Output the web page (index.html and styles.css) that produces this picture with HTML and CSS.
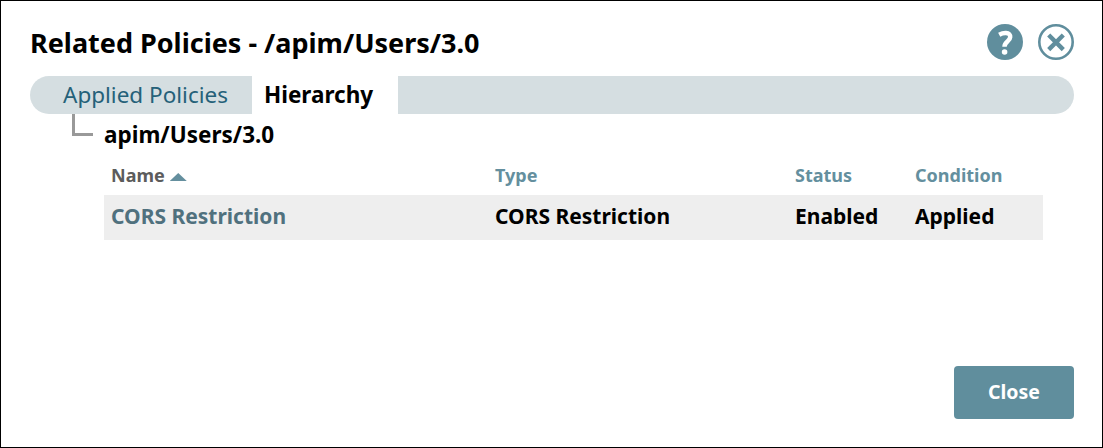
FILE: index.html
```html
<!DOCTYPE html>
<html lang="en">
<head>
<meta charset="utf-8">
<title>Related Policies</title>
<link rel="stylesheet" href="styles.css">
</head>
<body>
<main class="dialog">
  <header class="header">
    <h1 class="title">Related Policies - /apim/Users/3.0</h1>
    <div class="actions">
      <svg class="icon" viewBox="0 0 36 36" role="img" aria-label="Help"><circle cx="18" cy="18" r="18" fill="#608e9d"/><path d="M12.2 10.7C15 9.2 17.2 8.9 19 9C22 9.2 23.4 10.8 23.2 13.2C23 17.5 17.5 17 17.5 22.8" fill="none" stroke="#fff" stroke-width="4.5"/><circle cx="17.6" cy="28" r="2.8" fill="#fff"/></svg>
      <svg class="icon" viewBox="0 0 36 36" role="img" aria-label="Close dialog"><circle cx="18" cy="18" r="16.7" fill="none" stroke="#608e9d" stroke-width="2.6"/><path d="M10.7 11L25.3 25.6M25.3 11L10.7 25.6" stroke="#608e9d" stroke-width="4.4"/></svg>
    </div>
  </header>
  <nav class="tabs">
    <a class="tab">Applied Policies</a>
    <a class="tab tab-active">Hierarchy</a>
  </nav>
  <section class="node">
    <div class="branch"></div>
    <div class="content">
      <h2 class="path">apim/Users/3.0</h2>
      <div class="row head">
        <span class="sorted">Name<i class="arrow"></i></span><span>Type</span><span>Status</span><span>Condition</span>
      </div>
      <div class="row item">
        <a class="link">CORS Restriction</a><span>CORS Restriction</span><span>Enabled</span><span>Applied</span>
      </div>
    </div>
  </section>
  <footer class="footer"><button class="button">Close</button></footer>
</main>
</body>
</html>
```
FILE: styles.css
```css
* { box-sizing: border-box; }
body { margin: 0; font-family: "Noto Sans", sans-serif; color: #000; background: #fff; }
.dialog { width: 1103px; height: 448px; border: 1px solid #000; padding: 23px 28px 28px 29px; display: flex; flex-direction: column; }
.header { display: flex; justify-content: space-between; height: 52px; }
.title { margin: 0; font-size: 27px; line-height: 38px; font-weight: 700; white-space: nowrap; }
.actions { display: flex; gap: 15px; }
.icon { width: 36px; height: 36px; }
.tabs { display: flex; height: 38px; border-radius: 19px; background: #d5dee1; overflow: hidden; padding-left: 21px; flex: none; }
.tab { width: 201px; padding-left: 12px; font-size: 22.5px; line-height: 37px; color: #256179; white-space: nowrap; }
.tab-active { width: 146px; background: #fff; color: #000; font-weight: 700; }
.node { display: flex; }
.branch { width: 21px; height: 22px; margin: 0 11px 0 42px; border-left: 3px solid #999; border-bottom: 3px solid #999; }
.content { width: 939px; }
.path { margin: 0; height: 42px; font-size: 22.5px; line-height: 42px; font-weight: 700; }
.row { display: grid; grid-template-columns: 384px 300px 120px auto; padding-left: 7px; font-weight: 700; white-space: nowrap; }
.head { height: 39px; font-size: 18px; line-height: 39px; color: #648f9e; }
.sorted { color: #5c5c5c; }
.arrow { display: inline-block; width: 17px; height: 8px; margin-left: 5px; background: #648f9e; clip-path: polygon(50% 0, 100% 100%, 0 100%); vertical-align: 1px; }
.item { height: 45px; font-size: 21px; line-height: 43px; background: #eee; }
.link { color: #50717e; }
.footer { margin-top: auto; display: flex; justify-content: flex-end; }
.button { width: 120px; height: 53px; border: 0; border-radius: 4px; padding: 0 0 2px; background: #608e9d; color: #fff; font: 700 19.5px "Noto Sans", sans-serif; }
```
